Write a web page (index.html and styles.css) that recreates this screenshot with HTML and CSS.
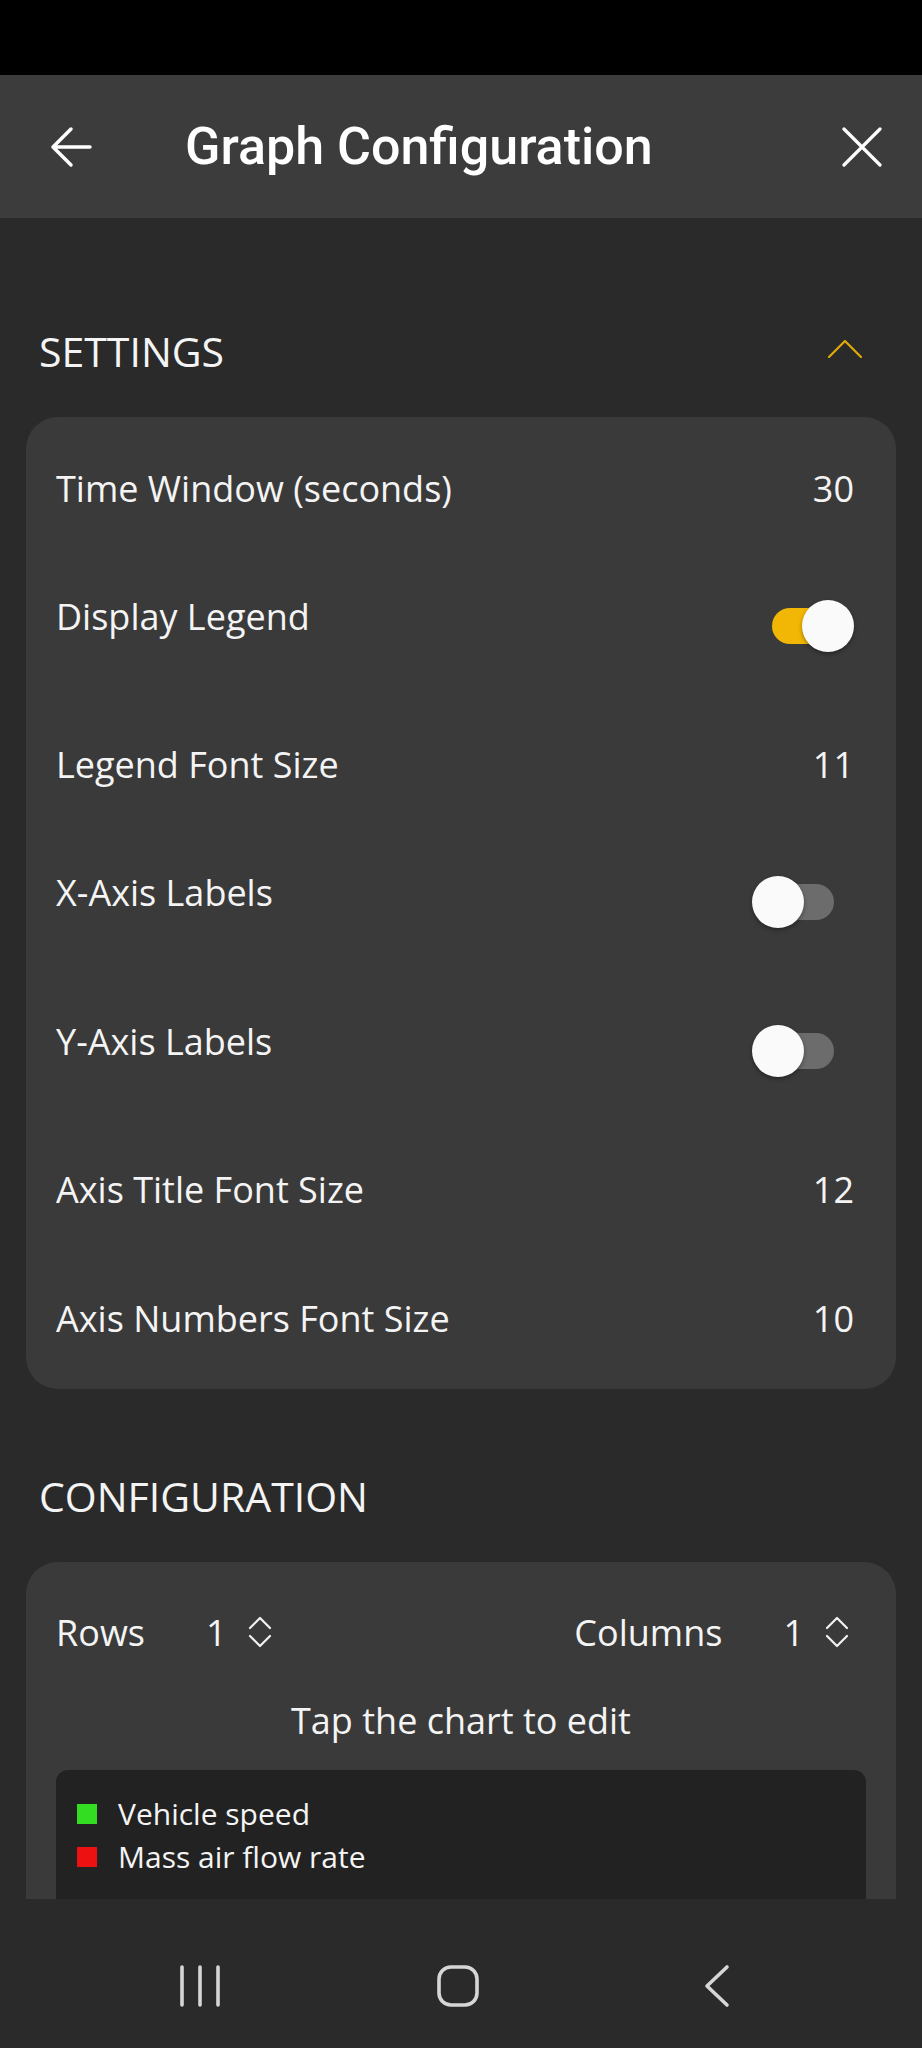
FILE: index.html
```html
<!DOCTYPE html>
<html>
<head>
  <title>Graph Configuration</title>
  <link rel="stylesheet" href="styles.css">
</head>
<body>

<div class="status-bar"></div>

<!-- Top app bar -->
<div class="app-bar">
  <svg class="bar-icon" width="44" height="44" viewBox="0 0 44 44">
    <path d="M42 22 H5 M23 4 L5 22 L23 40" fill="none" stroke="#fff" stroke-width="3.5" stroke-linecap="round" stroke-linejoin="round"/>
  </svg>
  <h1>Graph Configuration</h1>
  <svg class="bar-icon close" width="40" height="40" viewBox="0 0 40 40">
    <path d="M2 2 L38 38 M38 2 L2 38" fill="none" stroke="#fff" stroke-width="3.2" stroke-linecap="round"/>
  </svg>
</div>

<div class="content">

  <!-- Settings -->
  <div class="section-head first">
    <span>SETTINGS</span>
    <svg width="34" height="18" viewBox="0 0 34 18">
      <path d="M1 17 L17 1 L33 17" fill="none" stroke="#e0aa0a" stroke-width="2.2" stroke-linecap="round" stroke-linejoin="round"/>
    </svg>
  </div>

  <div class="card">
    <div class="row">
      <span class="label">Time Window (seconds)</span>
      <span class="value">30</span>
    </div>
    <div class="row switch-row">
      <span class="label">Display Legend</span>
      <div class="switch on"><div class="track"></div><div class="knob"></div></div>
    </div>
    <div class="row">
      <span class="label">Legend Font Size</span>
      <span class="value">11</span>
    </div>
    <div class="row switch-row">
      <span class="label">X-Axis Labels</span>
      <div class="switch"><div class="track"></div><div class="knob"></div></div>
    </div>
    <div class="row switch-row spaced">
      <span class="label">Y-Axis Labels</span>
      <div class="switch"><div class="track"></div><div class="knob"></div></div>
    </div>
    <div class="row">
      <span class="label">Axis Title Font Size</span>
      <span class="value">12</span>
    </div>
    <div class="row tight">
      <span class="label">Axis Numbers Font Size</span>
      <span class="value">10</span>
    </div>
  </div>

  <!-- Configuration -->
  <div class="section-head">
    <span>CONFIGURATION</span>
  </div>

  <div class="card config">
    <div class="grid-row">
      <div class="stepper">
        <span class="step-label">Rows</span>
        <span class="step-num">1</span>
        <svg width="26" height="32" viewBox="0 0 26 32">
          <path d="M3 12 L13 2 L23 12 M3 20 L13 30 L23 20" fill="none" stroke="#f2f2f2" stroke-width="2.2" stroke-linecap="round" stroke-linejoin="round"/>
        </svg>
      </div>
      <div class="stepper">
        <span class="step-label">Columns</span>
        <span class="step-num">1</span>
        <svg width="26" height="32" viewBox="0 0 26 32">
          <path d="M3 12 L13 2 L23 12 M3 20 L13 30 L23 20" fill="none" stroke="#f2f2f2" stroke-width="2.2" stroke-linecap="round" stroke-linejoin="round"/>
        </svg>
      </div>
    </div>
    <p class="hint">Tap the chart to edit</p>
    <div class="chart">
      <div class="legend-item"><span class="swatch green"></span>Vehicle speed</div>
      <div class="legend-item"><span class="swatch red"></span>Mass air flow rate</div>
    </div>
  </div>

</div>

<!-- System navigation -->
<div class="nav-bar">
  <svg class="nav-recent" width="44" height="44" viewBox="0 0 44 44">
    <path d="M4 3 V41 M22 3 V41 M40 3 V41" fill="none" stroke="#d6d6d6" stroke-width="3.6" stroke-linecap="round"/>
  </svg>
  <svg class="nav-home" width="44" height="44" viewBox="0 0 44 44">
    <rect x="3" y="3" width="38" height="38" rx="12" fill="none" stroke="#d6d6d6" stroke-width="3.6"/>
  </svg>
  <svg class="nav-back" width="28" height="44" viewBox="0 0 28 44">
    <path d="M24 3 L4 22 L24 41" fill="none" stroke="#d6d6d6" stroke-width="3.6" stroke-linecap="round" stroke-linejoin="round"/>
  </svg>
</div>

</body>
</html>
```

FILE: styles.css
```css
body {
  margin: 0;
  width: 922px;
  height: 2048px;
  background-color: #2a2a2a;
  color: #f4f4f4;
  font-family: 'Open Sans', 'Noto Sans', sans-serif;
  overflow: hidden;
}
.status-bar {
  height: 75px;
  background-color: #000;
}
.app-bar {
  height: 143px;
  background-color: #3c3c3c;
  display: flex;
  align-items: center;
  padding: 0 40px 0 48px;
}
.app-bar h1 {
  flex: 1;
  margin: 0 0 0 93px;
  font-family: Roboto, 'Noto Sans', sans-serif;
  font-weight: 500;
  font-size: 52px;
  color: #fff;
}
.bar-icon {
  display: block;
}
.content {
  height: 1681px;
  overflow: hidden;
  padding-top: 26px;
  box-sizing: border-box;
}
.section-head {
  height: 80px;
  margin: 67px 0 26px;
  padding: 0 60px 0 39px;
  display: flex;
  align-items: center;
  justify-content: space-between;
  font-size: 41px;
}
.section-head svg {
  margin-top: -4px;
}
.card {
  margin: 0 26px;
  padding: 2px 42px 2px 30px;
  background-color: #3a3a3a;
  border-radius: 32px;
}
.row {
  height: 138px;
  display: flex;
  align-items: center;
  justify-content: space-between;
  font-size: 36px;
}
.row.spaced {
  margin-top: 11px;
}
.row.tight {
  margin-top: -9px;
}
.switch-row .label {
  margin-bottom: 20px;
}
.switch {
  position: relative;
  width: 102px;
  height: 52px;
}
.track {
  margin: 8px 0 0 20px;
  width: 62px;
  height: 36px;
  border-radius: 18px;
  background-color: #6c6c6c;
}
.switch.on .track {
  background-color: #f2b705;
}
.knob {
  position: absolute;
  top: 0;
  left: 0;
  width: 52px;
  height: 52px;
  border-radius: 50%;
  background-color: #fafafa;
  box-shadow: 0 2px 4px rgba(0,0,0,0.35);
}
.switch.on .knob {
  left: 50px;
}
.config {
  padding: 20px 46px 0 30px;
  border-radius: 32px 32px 0 0;
  height: 600px;
}
.grid-row {
  height: 100px;
  display: flex;
  align-items: center;
  justify-content: space-between;
  font-size: 36px;
}
.stepper {
  display: flex;
  align-items: center;
}
.step-label {
  margin-right: 61px;
}
.step-num {
  margin-right: 20px;
}
.hint {
  margin: 14px -16px 25px 0;
  text-align: center;
  font-size: 36px;
}
.chart {
  height: 400px;
  margin-right: -16px;
  padding: 22px 21px;
  box-sizing: border-box;
  background-color: #222;
  border-radius: 12px;
}
.legend-item {
  display: flex;
  align-items: center;
  height: 43px;
  font-size: 30px;
}
.swatch {
  width: 20px;
  height: 20px;
  margin-right: 21px;
}
.green {
  background-color: #33dd22;
}
.red {
  background-color: #ee1111;
}
.nav-bar {
  height: 149px;
  display: flex;
  align-items: center;
  padding: 25px 0 0 178px;
  box-sizing: border-box;
}
.nav-home {
  margin-left: 214px;
}
.nav-back {
  margin-left: 223px;
}
```
